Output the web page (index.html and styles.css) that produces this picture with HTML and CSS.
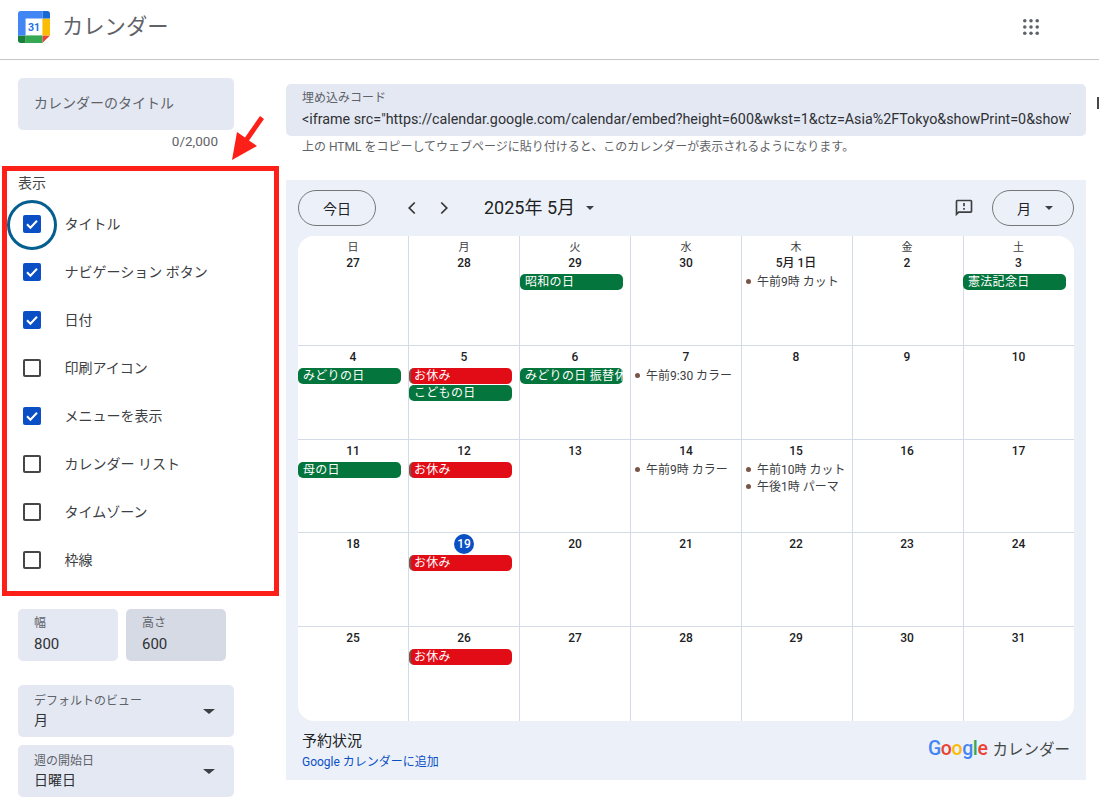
FILE: index.html
```html
<!DOCTYPE html>
<html lang="ja">
<head>
<meta charset="utf-8">
<title>カレンダー</title>
<link rel="stylesheet" href="styles.css">
</head>
<body>
<header class="topbar">
  <svg class="logo" viewBox="0 0 200 200" aria-hidden="true">
    <polygon fill="#fff" points="152.632,47.368 47.368,47.368 47.368,152.632 152.632,152.632"/>
    <polygon fill="#EA4335" points="152.632,200 200,152.632 152.632,152.632"/>
    <polygon fill="#FBBC04" points="200,47.368 152.632,47.368 152.632,152.632 200,152.632"/>
    <polygon fill="#34A853" points="152.632,152.632 47.368,152.632 47.368,200 152.632,200"/>
    <path fill="#188038" d="M0,152.632v31.579C0,192.935,7.065,200,15.789,200h31.579v-47.368H0z"/>
    <path fill="#1967D2" d="M200,47.368V15.789C200,7.065,192.935,0,184.211,0h-31.579v47.368H200z"/>
    <path fill="#4285F4" d="M152.632,0H15.789C7.065,0,0,7.065,0,15.789v136.842h47.368V47.368h105.263V0z"/>
    <text x="100" y="124" text-anchor="middle" class="logo-num">31</text>
  </svg>
  <span class="product">カレンダー</span>
  <svg class="apps" viewBox="0 0 18 18" aria-hidden="true">
    <circle cx="2" cy="2" r="2"/><circle cx="9" cy="2" r="2"/><circle cx="16" cy="2" r="2"/>
    <circle cx="2" cy="9" r="2"/><circle cx="9" cy="9" r="2"/><circle cx="16" cy="9" r="2"/>
    <circle cx="2" cy="16" r="2"/><circle cx="9" cy="16" r="2"/><circle cx="16" cy="16" r="2"/>
  </svg>
</header>

<div class="page">
  <aside class="side">
    <div class="field title-field">カレンダーのタイトル</div>
    <div class="counter">0/2,000</div>

    <section class="options">
      <div class="options-label">表示</div>
      <label class="opt"><span class="box on"><svg viewBox="0 0 18 18"><path d="M4 9.3l3.4 3.4L14 5.8"/></svg></span><span class="opt-text">タイトル</span></label>
      <label class="opt"><span class="box on"><svg viewBox="0 0 18 18"><path d="M4 9.3l3.4 3.4L14 5.8"/></svg></span><span class="opt-text">ナビゲーション ボタン</span></label>
      <label class="opt"><span class="box on"><svg viewBox="0 0 18 18"><path d="M4 9.3l3.4 3.4L14 5.8"/></svg></span><span class="opt-text">日付</span></label>
      <label class="opt"><span class="box"></span><span class="opt-text">印刷アイコン</span></label>
      <label class="opt"><span class="box on"><svg viewBox="0 0 18 18"><path d="M4 9.3l3.4 3.4L14 5.8"/></svg></span><span class="opt-text">メニューを表示</span></label>
      <label class="opt"><span class="box"></span><span class="opt-text">カレンダー リスト</span></label>
      <label class="opt"><span class="box"></span><span class="opt-text">タイムゾーン</span></label>
      <label class="opt"><span class="box"></span><span class="opt-text">枠線</span></label>
    </section>

    <div class="size-row">
      <div class="field size"><span class="f-label">幅</span><span class="f-value">800</span></div>
      <div class="field size size-hover"><span class="f-label">高さ</span><span class="f-value">600</span></div>
    </div>

    <div class="field select first-select">
      <div><span class="f-label">デフォルトのビュー</span><span class="s-value">月</span></div>
      <i class="caret"></i>
    </div>
    <div class="field select">
      <div><span class="f-label">週の開始日</span><span class="s-value">日曜日</span></div>
      <i class="caret"></i>
    </div>
  </aside>

  <main class="content">
    <div class="embed-row">
      <div class="embed">
        <div class="embed-label">埋め込みコード</div>
        <div class="embed-code">&lt;iframe src="https://calendar.google.com/calendar/embed?height=600&amp;wkst=1&amp;ctz=Asia%2FTokyo&amp;showPrint=0&amp;showTitle=0" style="border:solid 1px #777" width="800" height="600"&gt;</div>
      </div>
      <span class="copy"></span>
    </div>
    <p class="help">上の HTML をコピーしてウェブページに貼り付けると、このカレンダーが表示されるようになります。</p>

    <section class="cal">
      <div class="cal-bar">
        <span class="pill today-btn">今日</span>
        <svg class="chev first" viewBox="0 0 24 24"><path d="M15 6l-6 6 6 6"/></svg>
        <svg class="chev" viewBox="0 0 24 24"><path d="M9 6l6 6-6 6"/></svg>
        <span class="cal-title">2025年 5月</span>
        <i class="caret small"></i>
        <svg class="feedback" viewBox="0 0 24 24"><path d="M20 2H4c-1.1 0-1.99.9-1.99 2L2 22l4-4h14c1.1 0 2-.9 2-2V4c0-1.1-.9-2-2-2zm0 14H5.17L4 17.17V4h16v12zM11 12h2v2h-2zm0-6h2v4h-2z"/></svg>
        <span class="pill view-btn">月<i class="caret small"></i></span>
      </div>

      <div class="grid">
        <div class="cell"><div class="dow">日</div><div class="date">27</div></div>
        <div class="cell"><div class="dow">月</div><div class="date">28</div></div>
        <div class="cell"><div class="dow">火</div><div class="date">29</div><div class="ev green">昭和の日</div></div>
        <div class="cell"><div class="dow">水</div><div class="date">30</div></div>
        <div class="cell"><div class="dow">木</div><div class="date">5月 1日</div><div class="timed">午前9時 カット</div></div>
        <div class="cell"><div class="dow">金</div><div class="date">2</div></div>
        <div class="cell"><div class="dow">土</div><div class="date">3</div><div class="ev green">憲法記念日</div></div>

        <div class="cell"><div class="date">4</div><div class="ev green">みどりの日</div></div>
        <div class="cell"><div class="date">5</div><div class="ev red">お休み</div><div class="ev green">こどもの日</div></div>
        <div class="cell"><div class="date">6</div><div class="ev green">みどりの日 振替休日</div></div>
        <div class="cell"><div class="date">7</div><div class="timed">午前9:30 カラー</div></div>
        <div class="cell"><div class="date">8</div></div>
        <div class="cell"><div class="date">9</div></div>
        <div class="cell"><div class="date">10</div></div>

        <div class="cell"><div class="date">11</div><div class="ev green">母の日</div></div>
        <div class="cell"><div class="date">12</div><div class="ev red">お休み</div></div>
        <div class="cell"><div class="date">13</div></div>
        <div class="cell"><div class="date">14</div><div class="timed">午前9時 カラー</div></div>
        <div class="cell"><div class="date">15</div><div class="timed">午前10時 カット</div><div class="timed">午後1時 パーマ</div></div>
        <div class="cell"><div class="date">16</div></div>
        <div class="cell"><div class="date">17</div></div>

        <div class="cell"><div class="date">18</div></div>
        <div class="cell"><div class="date now">19</div><div class="ev red">お休み</div></div>
        <div class="cell"><div class="date">20</div></div>
        <div class="cell"><div class="date">21</div></div>
        <div class="cell"><div class="date">22</div></div>
        <div class="cell"><div class="date">23</div></div>
        <div class="cell"><div class="date">24</div></div>

        <div class="cell"><div class="date">25</div></div>
        <div class="cell"><div class="date">26</div><div class="ev red">お休み</div></div>
        <div class="cell"><div class="date">27</div></div>
        <div class="cell"><div class="date">28</div></div>
        <div class="cell"><div class="date">29</div></div>
        <div class="cell"><div class="date">30</div></div>
        <div class="cell"><div class="date">31</div></div>
      </div>

      <footer class="cal-foot">
        <div>
          <div class="foot-title">予約状況</div>
          <div class="foot-link">Google カレンダーに追加</div>
        </div>
        <div class="brand"><span class="g-word"><b class="c-blue">G</b><b class="c-red">o</b><b class="c-yellow">o</b><b class="c-blue">g</b><b class="c-green">l</b><b class="c-red">e</b></span><span class="brand-name">カレンダー</span></div>
      </footer>
    </section>
  </main>
</div>

<span class="ring"></span>
<svg class="arrow" viewBox="0 0 36 50" aria-hidden="true">
  <polygon points="2,48 7,20 15,25.5 30,4 34,7 19,28.5 27,34"/>
</svg>
</body>
</html>
```

FILE: styles.css
```css
* { box-sizing: border-box; }
html, body { margin: 0; height: 801px; overflow: hidden; background: #fff; }
body {
  position: relative;
  font-family: Roboto, "Noto Sans CJK JP", sans-serif;
  color: #3c4043;
  font-size: 14px;
}
.topbar {
  height: 60px;
  border-bottom: 1px solid #c6c6c6;
  display: flex;
  align-items: center;
  padding: 0 0 6px 18px;
}
.logo { width: 32px; height: 32px; }
.logo-num { font: 700 66px Roboto, sans-serif; fill: #1a73e8; }
.product { margin: -4px 0 0 12px; font-size: 21.3px; color: #5f6368; }
.apps { width: 16px; height: 16px; margin: 1px 60px 0 auto; fill: #5f6368; }

.page { display: flex; }
.side { width: 286px; flex: none; }
.field { background: #e3e8f3; border-radius: 5px; height: 52px; }
.title-field {
  width: 216px;
  margin: 18px 0 0 18px;
  padding-left: 16px;
  line-height: 50px;
  color: #5f6368;
}
.counter {
  width: 218px;
  text-align: right;
  line-height: 22px;
  font-size: 13.5px;
  color: #5f6368;
}
.options {
  width: 277px;
  height: 430px;
  margin: 14px 0 0 2px;
  border: 5px solid #fc2018;
  padding-top: 2px;
}
.options-label { padding-left: 11px; line-height: 20px; margin-bottom: 7px; color: #444746; }
.opt {
  display: flex;
  align-items: center;
  height: 48px;
  padding-left: 16px;
  color: #3c4043;
}
.opt-text { margin-bottom: 2px; }
.box {
  width: 18px;
  height: 18px;
  margin-right: 23.5px;
  border: 2px solid #444746;
  border-radius: 2px;
  flex: none;
}
.box.on { background: #0b4fc4; border: 0; }
.box svg { display: block; width: 18px; height: 18px; fill: none; stroke: #fff; stroke-width: 2; }

.size-row { display: flex; gap: 8px; margin: 13px 0 0 18px; }
.size { width: 100px; padding: 6px 0 0 16px; }
.size-hover { background: #d6dae4; }
.f-label { display: block; font-size: 12px; line-height: 16px; color: #5f6368; }
.f-value { display: block; font-size: 15px; line-height: 24px; margin-top: 1px; color: #303134; }
.select {
  width: 216px;
  margin: 8px 0 0 18px;
  padding: 8px 0 0 16px;
  display: flex;
  justify-content: space-between;
}
.first-select { margin-top: 24px; }
.s-value { display: block; font-size: 14px; line-height: 20px; margin-top: 1px; color: #303134; }
.caret {
  width: 0;
  height: 0;
  border-left: 4px solid transparent;
  border-right: 4px solid transparent;
  border-top: 4px solid #3c4043;
}
.select .caret { margin: 16px 19px 0 0; border-left-width: 6px; border-right-width: 6px; border-top-width: 5px; }

.content { width: 813px; flex: none; padding-top: 24px; }
.embed-row { display: flex; align-items: flex-start; gap: 11px; }
.embed {
  width: 800px;
  height: 52px;
  flex: none;
  background: #e3e8f3;
  border-radius: 5px;
  padding: 6px 15px 0 16px;
}
.embed-label { font-size: 12px; line-height: 17px; color: #5f6368; }
.embed-code {
  white-space: nowrap;
  overflow: hidden;
  font-size: 14.3px;
  line-height: 24px;
  color: #303134;
}
.copy { width: 2px; height: 12px; margin-top: 13px; background: #444746; }
.help { margin: 0; padding-left: 16px; font-size: 12px; line-height: 22px; color: #5f6368; }

.cal { width: 800px; height: 600px; margin-top: 22px; background: #ecf1f9; }
.cal-bar {
  height: 56px;
  padding: 10px 12px 0;
  display: flex;
  align-items: flex-start;
}
.pill {
  height: 36px;
  border: 1px solid #747775;
  border-radius: 18px;
  display: flex;
  align-items: center;
  justify-content: center;
  color: #202124;
}
.today-btn { width: 78px; }
.view-btn { width: 82px; gap: 14px; justify-content: flex-start; padding-left: 24px; }
.chev { width: 22px; height: 22px; margin: 7px 0 0 10px; fill: none; stroke: #333; stroke-width: 1.9; }
.chev.first { margin-left: 25px; }
.cal-title { margin: 5px 0 0 29px; font-size: 18px; line-height: 26px; color: #1f1f1f; }
.cal-bar > .caret { margin: 16px 0 0 11px; }
.feedback { width: 20px; height: 20px; margin: 8px 18px 0 auto; fill: #3c4043; }

.grid {
  width: 776px;
  height: 485px;
  margin-left: 12px;
  background: #fff;
  border-radius: 16px;
  overflow: hidden;
  display: grid;
  grid-template-columns: repeat(6, 111px) 110px;
  grid-template-rows: 110px 94px 93px 94px 94px;
}
.cell {
  min-width: 0;
  padding-top: 4px;
  border-right: 1px solid #d3dce6;
  border-bottom: 1px solid #d3dce6;
}
.cell:nth-child(7n) { border-right: 0; }
.cell:nth-child(7n+5), .cell:nth-child(7n+6), .cell:nth-child(7n) { padding-right: 2px; }
.cell:nth-child(7n) { padding-right: 1px; }
.cell:nth-child(7n) .ev { margin-left: -1px; }
.cell:nth-child(n+29) { border-bottom: 0; }
.dow { text-align: center; font-size: 11px; line-height: 16px; color: #3c4043; }
.date { text-align: center; font-size: 12px; font-weight: 500; line-height: 14px; color: #202124; margin-bottom: 4px; }
.date.now {
  width: 20px;
  height: 20px;
  margin: -3px auto 1px;
  border-radius: 50%;
  background: #0b4fc4;
  color: #fff;
  line-height: 20px;
}
.ev {
  width: 103px;
  height: 16px;
  margin-bottom: 1px;
  padding-left: 5px;
  border-radius: 5px;
  font-size: 12px;
  letter-spacing: .3px;
  line-height: 16px;
  color: #fff;
  white-space: nowrap;
  overflow: hidden;
}
.green { background: #04753c; }
.red { background: #e10c16; border-left: 2px solid #795548; padding-left: 3px; }
.timed {
  display: flex;
  align-items: center;
  gap: 6px;
  height: 17px;
  margin-top: -1px;
  margin-bottom: 1px;
  padding-left: 4px;
  font-size: 12px;
  line-height: 16px;
  color: #3c4043;
  white-space: nowrap;
  overflow: hidden;
}
.timed::before {
  content: "";
  width: 5px;
  height: 5px;
  flex: none;
  border-radius: 50%;
  background: #795548;
}

.cal-foot {
  display: flex;
  justify-content: space-between;
  align-items: center;
  padding: 9px 16px 0 16px;
}
.foot-title { font-size: 15px; line-height: 22px; color: #202124; }
.foot-link { font-size: 12px; line-height: 18px; margin-top: 1px; color: #0b4fc4; }
.brand { display: flex; align-items: baseline; gap: 5px; margin-top: -5px; }
.g-word { font-family: Roboto, sans-serif; font-size: 19.5px; letter-spacing: -.4px; }
.g-word b { font-weight: 500; }
.c-blue { color: #4285f4; }
.c-red { color: #ea4335; }
.c-yellow { color: #fbbc04; }
.c-green { color: #34a853; }
.brand-name { font-size: 15.5px; color: #444746; }

.ring {
  position: absolute;
  left: 7px;
  top: 200px;
  width: 50px;
  height: 50px;
  border: 3px solid #045e8f;
  border-radius: 50%;
}
.arrow {
  position: absolute;
  left: 230px;
  top: 112px;
  width: 36px;
  height: 50px;
  fill: #fc2018;
}
```
